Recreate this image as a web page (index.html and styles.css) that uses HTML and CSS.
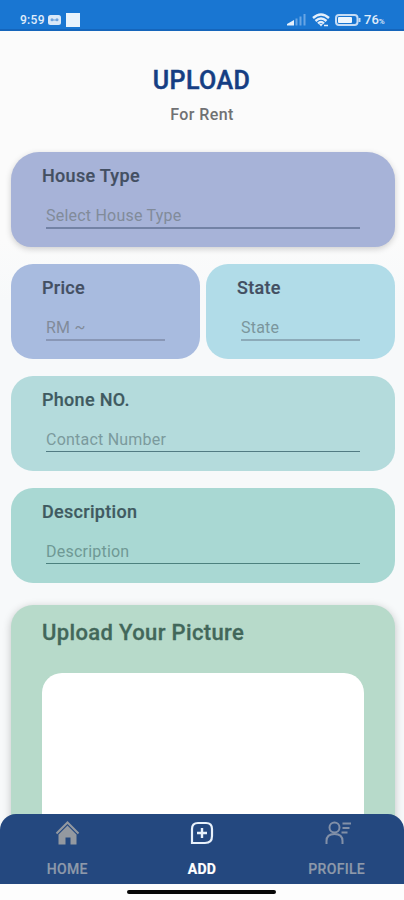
FILE: index.html
```html
<!DOCTYPE html>
<html lang="en">
<head>
<meta charset="utf-8">
<title>Upload</title>
<link rel="stylesheet" href="styles.css">
</head>
<body>
<header class="status">
  <span class="time">9:59</span>
  <svg class="tape" width="13" height="10" viewBox="0 0 13 10"><rect width="13" height="10" rx="2.5" fill="#d9e8f8"/><circle cx="4" cy="4.8" r="1.5" fill="#6da2dc"/><circle cx="9" cy="4.8" r="1.5" fill="#6da2dc"/><path d="M4 5h5" stroke="#6da2dc"/></svg>
  <span class="square"></span>
  <svg class="signal" width="19" height="13" viewBox="0 0 19 13"><path d="M0 12.5V11l7-4v5.500z" fill="#e4effb"/><path d="M9.500 12.500V5.500M13.500 12.500V3.500M17.500 12.500V1" stroke="#69a5e4" stroke-width="2"/></svg>
  <svg class="wifi" width="18" height="14" viewBox="0 0 18 14" fill="none" stroke="#e4effb" stroke-width="2.400"><path d="M1 5Q9-2 17 5M3.500 8Q9 3 14.500 8M6 10.500q3-3 6 0"/><path d="M7 11h4l-2 2.500z" fill="#e4effb" stroke="none"/><path d="M12 12.500h4" stroke-width="1.500"/></svg>
  <svg class="battery" width="26" height="12" viewBox="0 0 26 12"><rect x="1" y="1" width="21.500" height="10" rx="3" fill="none" stroke="#c5dcf5" stroke-width="2"/><rect x="3" y="3" width="14" height="6" rx="1" fill="#eef6fd"/><path d="M24.500 4v4" stroke="#c5dcf5" stroke-width="2"/></svg>
  <span class="percent">76<small>%</small></span>
</header>
<main class="page">
  <h1 class="title">UPLOAD</h1>
  <p class="subtitle">For Rent</p>
  <section class="card house"><h2 class="label">House Type</h2><div class="field">Select House Type</div></section>
  <div class="pair">
    <section class="card price"><h2 class="label">Price</h2><div class="field">RM ~</div></section>
    <section class="card state"><h2 class="label">State</h2><div class="field">State</div></section>
  </div>
  <section class="card phone"><h2 class="label">Phone NO.</h2><div class="field">Contact Number</div></section>
  <section class="card description"><h2 class="label">Description</h2><div class="field">Description</div></section>
  <section class="picture"><h2 class="picture-title">Upload Your Picture</h2><div class="preview"></div></section>
</main>
<nav class="nav">
  <a class="tab"><svg width="26" height="26" viewBox="0 0 26 26"><path d="M2.500 13.500L13.500 2.500l11 11" fill="none" stroke="#9499a0" stroke-width="2"/><path d="M13.500 5.500l9 9V24.500h-6v-7h-5v7H4.500V14.500z" fill="#9499a0"/></svg><span>HOME</span></a>
  <a class="tab active"><svg width="26" height="26" viewBox="0 0 26 26" fill="none" stroke="#e8f1fb" stroke-width="2.200"><path d="M9 3h8q6 0 6 6v7q0 7-7 7H3V9q0-6 6-6z"/><path d="M13 8v10M8 13h10" stroke-width="2.400"/></svg><span>ADD</span></a>
  <a class="tab"><svg width="26" height="26" viewBox="0 0 26 26" fill="none" stroke="#8290a8" stroke-width="2"><circle cx="10.500" cy="7.500" r="5"/><path d="M2.500 24v-3q0-7 8-7t8 7v3M18.500 3.500h8.500M18.500 8h7M17.500 12.500h6"/></svg><span>PROFILE</span></a>
</nav>
<footer class="gesture"><span class="handle"></span></footer>
</body>
</html>
```
FILE: styles.css
```css
* { box-sizing: border-box; }
body { margin: 0; width: 404px; height: 900px; overflow: hidden; display: flex; flex-direction: column; background: linear-gradient(#fbfbfb 240px, #f7f9fa 300px); font-family: Roboto, sans-serif; }
h1, h2, p { margin: 0; }
svg { display: block; overflow: visible; }
.status { height: 31px; flex: none; display: flex; align-items: center; padding: 10px 21px 0 20px; background: #1976d2; border-bottom: 2px solid #1565bb; color: #e0edfa; font-size: 12px; font-weight: 500; }
.time { width: 28px; letter-spacing: 0.3px; }
.square { width: 14px; height: 14px; margin-left: 5px; background: #e9f3fc; }
.signal { margin-left: auto; }
.wifi { margin-left: 6px; }
.battery { margin: 0 3px 0 5px; }
.percent { width: 19px; font-size: 13px; white-space: nowrap; }
.percent small { font-size: 8px; }
.page { flex: 1; min-height: 0; padding: 35px 9px 0 11px; }
.title { height: 29px; line-height: 29px; margin-right: 3px; text-align: center; font-size: 25px; font-weight: 500; letter-spacing: 0.4px; -webkit-text-stroke: 0.5px #153e83; color: #153e83; }
.subtitle { height: 20px; line-height: 20px; margin: 10px 2px 27px 0; text-align: center; font-size: 16px; font-weight: 500; letter-spacing: 0.4px; color: #707173; }
.card { height: 95px; padding: 13px 35px 0 31px; border-radius: 22px; }
.label { height: 22px; line-height: 21px; font-size: 18px; font-weight: 500; letter-spacing: 0.3px; -webkit-text-stroke: 0.2px currentColor; color: #434f62; }
.field { height: 24px; line-height: 22px; margin: 18px 0 0 4px; font-size: 16px; letter-spacing: 0.22px; color: #818b9a; border-bottom: 2px solid #7382a5; }
.house { background: #a7b3d8; border-radius: 28px 28px 20px 20px; box-shadow: 0 2px 6px rgba(0, 0, 0, .18); }
.pair { display: grid; grid-template-columns: 189px 189px; gap: 6px; margin: 17px 0; }
.price { background: #a8bbdf; }
.price .field { border-color: #8997b6; }
.state { background: #b1dce8; }
.state .field { border-color: #8cabb9; color: #7b969d; }
.phone { background: #b4dbdc; }
.phone .label, .description .label { color: #3f5a60; }
.phone .field, .description .field { height: 23px; border-bottom-width: 1px; }
.phone .field { border-color: #527b83; color: #7b9a9d; }
.description { background: #a9d8d3; margin-top: 17px; }
.description .field { border-color: #4c817e; color: #6f9995; }
.picture { height: 300px; margin-top: 22px; padding: 16px 31px 0; border-radius: 22px; background: #b7daca; box-shadow: 0 2px 8px rgba(0, 0, 0, .22); }
.picture-title { height: 24px; line-height: 24px; font-size: 22px; font-weight: 500; letter-spacing: 0.36px; -webkit-text-stroke: 0.3px #42675a; color: #42675a; }
.preview { height: 230px; margin-top: 28px; border-radius: 20px; background: #fff; }
.nav { position: relative; height: 70px; flex: none; display: grid; grid-template-columns: repeat(3, 1fr); border-radius: 16px 16px 0 0; background: #24487f; }
.tab { display: flex; flex-direction: column; align-items: center; padding-top: 6px; color: #8e99aa; font-size: 14px; font-weight: 500; letter-spacing: 0.3px; }
.tab span { line-height: 18px; margin-top: 14px; -webkit-text-stroke: 0.2px currentColor; }
.active { color: #fff; font-weight: 700; }
.gesture { position: relative; height: 16px; flex: none; display: flex; justify-content: center; padding: 6px 1px 0 0; background: #fdfdfd; }
.handle { width: 149px; height: 4px; border-radius: 2px; background: #080808; }
```
